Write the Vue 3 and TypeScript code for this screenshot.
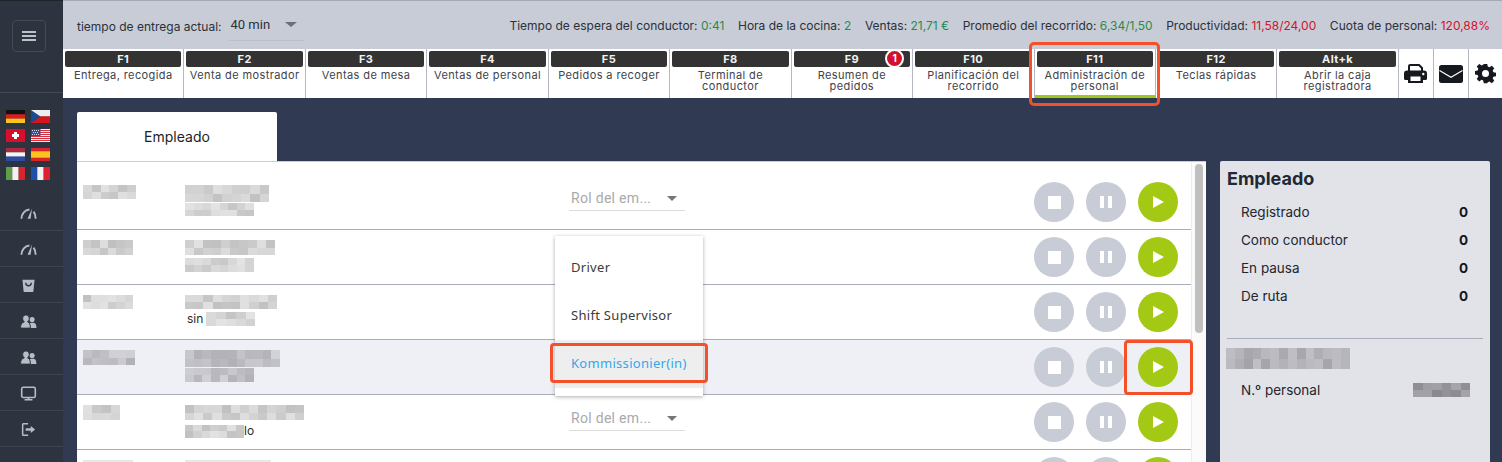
<script setup lang="ts">
type Cell = { w: number; h: number; color: string }

const fkeys = [
  { key: 'F1', label: 'Entrega, recogida' },
  { key: 'F2', label: 'Venta de mostrador' },
  { key: 'F3', label: 'Ventas de mesa' },
  { key: 'F4', label: 'Ventas de personal' },
  { key: 'F5', label: 'Pedidos a recoger' },
  { key: 'F8', label: 'Terminal de conductor' },
  { key: 'F9', label: 'Resumen de pedidos', badge: '1' },
  { key: 'F10', label: 'Planificación del recorrido' },
  { key: 'F11', label: 'Administración de personal', active: true },
  { key: 'F12', label: 'Teclas rápidas' },
  { key: 'Alt+k', label: 'Abrir la caja registradora' },
]

const stats = [
  { label: 'Tiempo de espera del conductor:', value: '0:41', tone: 'good' },
  { label: 'Hora de la cocina:', value: '2', tone: 'good' },
  { label: 'Ventas:', value: '21,71 €', tone: 'good' },
  { label: 'Promedio del recorrido:', value: '6,34/1,50', tone: 'good' },
  { label: 'Productividad:', value: '11,58/24,00', tone: 'bad' },
  { label: 'Cuota de personal:', value: '120,88%', tone: 'bad' },
]

const rows = [
  { nameW: 53, l1: 84, l2: 69, l1h: 17, l2h: 13, gap: 1, role: true, h: 55, pre: '', post: '', nameH: 14 },
  { nameW: 50, l1: 90, l2: 69, l1h: 15, l2h: 14, gap: 3, role: false, h: 55, pre: '', post: '', nameH: 15 },
  { nameW: 50, l1: 92, l2: 49, l1h: 14, l2h: 14, gap: 3, role: false, h: 55, pre: 'sin', post: '', nameH: 14 },
  { nameW: 52, l1: 95, l2: 69, l1h: 17, l2h: 14, gap: 1, role: false, h: 55, pre: '', post: '', nameH: 15, hover: true },
  { nameW: 37, l1: 119, l2: 59, l1h: 15, l2h: 13, gap: 4, role: true, h: 55, pre: '', post: 'lo', nameH: 15 },
]

const summary = ['Registrado', 'Como conductor', 'En pausa', 'De ruta']
const menuItems = ['Driver', 'Shift Supervisor', 'Kommissionier(in)']
const navIcons = ['gauge', 'gauge', 'bag', 'users', 'users', 'monitor', 'logout']

// Deterministic mosaic standing in for the blurred names in the reference.
function mosaic(width: number, height: number, seed: number, base: number): Cell[] {
  const cells: Cell[] = []
  const cols = Math.max(3, Math.round(width / 9))
  const cw = width / cols
  const rowsCount = 2
  for (let r = 0; r < rowsCount; r++) {
    for (let c = 0; c < cols; c++) {
      const n = Math.sin((c + 1) * 12.9898 + (r + 1) * 78.233 + seed) * 43758.5453
      const f = n - Math.floor(n)
      const g = Math.round(base + f * 34)
      cells.push({ w: cw, h: height / rowsCount, color: `rgb(${g},${g},${g + (base < 190 ? 6 : 1)})` })
    }
  }
  return cells
}
</script>

<template>
  <div class="app">
    <aside class="sidebar">
      <div class="burger-zone">
        <button class="burger" aria-label="Menú">
          <span></span><span></span><span></span>
        </button>
      </div>
      <div class="flags">
        <svg class="flag" viewBox="0 0 19 13"><rect width="19" height="4.4" fill="#111"/><rect y="4.3" width="19" height="4.4" fill="#dd1c1c"/><rect y="8.6" width="19" height="4.4" fill="#f7c51e"/></svg>
        <svg class="flag" viewBox="0 0 19 13"><rect width="19" height="6.5" fill="#eee"/><rect y="6.5" width="19" height="6.5" fill="#d7141a"/><path d="M0 0L9.5 6.5L0 13Z" fill="#1b4a8f"/></svg>
        <svg class="flag" viewBox="0 0 19 13"><rect width="19" height="13" fill="#da0d2e"/><path d="M8 3h3v2h2v3h-2v2H8V8H6V5h2z" fill="#fff"/></svg>
        <svg class="flag" viewBox="0 0 19 13"><rect width="19" height="13" fill="#f2f2f2"/><path d="M0 1h19v1H0zM0 3h19v1H0zM0 5h19v1H0zM0 7h19v1H0zM0 9h19v1H0zM0 11h19v1H0z" fill="#d4303e"/><rect width="9.5" height="7" fill="#39498c"/><path d="M1 1h1v1H1zM3 1h1v1H3zM5 1h1v1H5zM7 1h1v1H7zM2 3h1v1H2zM4 3h1v1H4zM6 3h1v1H6zM1 5h1v1H1zM3 5h1v1H3zM5 5h1v1H5zM7 5h1v1H7z" fill="#d8dcef"/></svg>
        <svg class="flag" viewBox="0 0 19 13"><rect width="19" height="4.4" fill="#b0283c"/><rect y="4.3" width="19" height="4.4" fill="#f4f4f4"/><rect y="8.6" width="19" height="4.4" fill="#2a4da3"/></svg>
        <svg class="flag" viewBox="0 0 19 13"><rect width="19" height="13" fill="#d9252a"/><rect y="3.3" width="19" height="6.4" fill="#f9c41f"/></svg>
        <svg class="flag" viewBox="0 0 19 13"><rect width="6.4" height="13" fill="#5c9e4b"/><rect x="6.3" width="6.4" height="13" fill="#f2f2f2"/><rect x="12.6" width="6.4" height="13" fill="#d6252f"/></svg>
        <svg class="flag" viewBox="0 0 19 13"><rect width="6.4" height="13" fill="#1f4fa8"/><rect x="6.3" width="6.4" height="13" fill="#f2f2f2"/><rect x="12.6" width="6.4" height="13" fill="#e0202c"/></svg>
      </div>
      <nav class="nav">
        <div v-for="(icon, i) in navIcons" :key="i" class="nav-item">
          <svg v-if="icon === 'gauge'" class="nav-icon" viewBox="0 0 18 18" fill="none" stroke="#b8bcc4" stroke-width="2">
            <path d="M1.5 14.5 C1.6 9.800 4.800 5.200 10 4.800" />
            <path d="M14.400 7 C15.900 9 16.600 11.600 16.600 14.500" />
            <path d="M8 14.500 L12.800 3.800 L11.200 14.500 Z" fill="#b8bcc4" stroke="none"/>
          </svg>
          <svg v-else-if="icon === 'bag'" class="nav-icon" viewBox="0 0 18 18">
            <path d="M2.600 3 H15.400 L14.200 15 Q14.100 16 13.200 16 H4.800 Q3.900 16 3.800 15 Z" fill="#b8bcc4"/>
            <path d="M6 6 C6.200 10.400 11.800 10.400 12 6" fill="none" stroke="#2e3440" stroke-width="1.400"/>
          </svg>
          <svg v-else-if="icon === 'users'" class="nav-icon" viewBox="0 0 18 18" fill="#b8bcc4">
            <path d="M12.800 4.200 A2.700 2.700 0 1 1 12.800 9.600 A2.700 2.700 0 1 1 12.800 4.200 Z"/>
            <path d="M11 16 C11.200 13.600 11 12 9.800 10.800 C11 10.200 14.200 10 15.800 10.800 C17 11.400 17.400 13.600 17.400 16 Z"/>
            <path d="M6.300 2 A3.500 3.500 0 0 1 9.800 5.500 C9.800 7.400 8.800 8.600 8 9.400 C10.300 10.300 11 12 10.900 16 H0.600 C0.600 12 1.700 10.300 4.600 9.400 C3.800 8.600 2.800 7.400 2.800 5.500 A3.500 3.500 0 0 1 6.300 2 Z" stroke="#2e343f" stroke-width="1"/>
          </svg>
          <svg v-else-if="icon === 'monitor'" class="nav-icon" viewBox="0 0 18 18" fill="none" stroke="#b8bcc4">
            <rect x="1.800" y="2.400" width="14.400" height="10.800" rx="1.600" stroke-width="1.700"/>
            <path d="M5.500 15.600 H12.500" stroke-width="1.800" stroke-linecap="round"/>
            <path d="M9 13 V15.400" stroke-width="2"/>
          </svg>
          <svg v-else class="nav-icon" viewBox="0 0 18 18" fill="none" stroke="#b8bcc4" stroke-width="1.600">
            <path d="M8.600 3 H3.600 Q2.800 3 2.800 3.800 V14.400 Q2.800 15.200 3.600 15.200 H8.600"/>
            <path d="M6 9 H12" stroke-width="2.600"/>
            <path d="M11.400 5.400 L16 9 L11.400 12.600 Z" fill="#b8bcc4" stroke="none"/>
          </svg>
        </div>
      </nav>
    </aside>

    <div class="main">
      <header class="topbar">
        <div class="delivery">
          <span class="delivery-label">tiempo de entrega actual:</span>
          <div class="delivery-select">
            <span>40 min</span>
            <i class="caret caret-dark"></i>
          </div>
        </div>
        <div class="stats">
          <span v-for="s in stats" :key="s.label" class="stat">{{ s.label }} <b :class="s.tone">{{ s.value }}</b></span>
        </div>
      </header>

      <div class="keys">
        <button
          v-for="k in fkeys"
          :key="k.key"
          class="key"
          :class="{ active: k.active }"
        >
          <span class="key-cap">{{ k.key }}</span>
          <span class="key-label">{{ k.label }}</span>
          <span v-if="k.badge" class="badge">{{ k.badge }}</span>
          <span v-if="k.active" class="callout key-callout"></span>
        </button>
        <button class="tool" aria-label="Imprimir">
          <svg viewBox="0 0 23 19" width="23" height="19">
            <path d="M5 8 V2.300 A1.300 1.300 0 0 1 6.300 1 H15 L18 4 V8" fill="none" stroke="#15181e" stroke-width="2"/>
            <path d="M3 6.500 H20 A3 3 0 0 1 23 9.500 V15 A1.500 1.500 0 0 1 21.500 16 H19 V19 H4 V16 H1.500 A1.500 1.500 0 0 1 0 15 V9.500 A3 3 0 0 1 3 6.500 Z" fill="#15181e"/>
            <rect x="6.500" y="12.500" width="10" height="4.500" fill="#fff"/>
            <circle cx="19.300" cy="10" r="1.200" fill="#fff"/>
          </svg>
        </button>
        <button class="tool" aria-label="Correo">
          <svg viewBox="0 0 24 18" width="24" height="18">
            <rect width="24" height="18" rx="2.500" fill="#15181e"/>
            <path d="M0.500 5.500 L12 12.200 L23.500 5.500" fill="none" stroke="#fff" stroke-width="1.200"/>
          </svg>
        </button>
        <button class="tool tool-last" aria-label="Ajustes">
          <svg viewBox="0 0 24 24" width="21" height="21" fill="#15181e">
            <path fill-rule="evenodd" d="M10 1h4l.6 3.100 1.900.8 2.700-1.800 2.800 2.800-1.800 2.700.8 1.900 3 .5v4l-3 .6-.8 1.900 1.800 2.700-2.800 2.800-2.700-1.800-1.900.8L14 23h-4l-.6-3-1.900-.8-2.700 1.800L2 18.200l1.800-2.700-.8-1.900-3-.6v-4l3-.5.8-1.900L2 3.900 4.800 1.100l2.700 1.800 1.900-.8zM12 8a4 4 0 1 0 0 8 4 4 0 0 0 0-8z"/>
          </svg>
        </button>
      </div>

      <div class="content">
        <section class="left">
          <div class="tab">Empleado</div>
          <div class="table">
            <div class="rows">
              <div v-for="(r, i) in rows" :key="i" class="row" :class="{ hover: r.hover }" :style="{ height: r.h + 'px' }">
                <div class="col-name">
                  <div class="blur" :style="{ width: r.nameW + 'px', height: r.nameH * 1 + 'px' }">
                    <i v-for="(c, j) in mosaic(r.nameW, r.nameH, i + 1, r.hover ? 176 : 192)" :key="j" :style="{ width: c.w + 'px', height: c.h + 'px', background: c.color }"></i>
                  </div>
                </div>
                <div class="col-info">
                  <div class="blur" :style="{ width: r.l1 + 'px', height: r.l1h + 'px' }">
                    <i v-for="(c, j) in mosaic(r.l1, r.l1h, i + 20, r.hover ? 176 : 192)" :key="j" :style="{ width: c.w + 'px', height: c.h + 'px', background: c.color }"></i>
                  </div>
                  <div class="line2" :style="{ marginTop: r.gap + 'px' }">
                    <span v-if="r.pre" class="plain pre">{{ r.pre }}</span>
                    <div class="blur" :style="{ width: r.l2 + 'px', height: r.l2h + 'px' }">
                      <i v-for="(c, j) in mosaic(r.l2, r.l2h, i + 40, r.hover ? 176 : 194)" :key="j" :style="{ width: c.w + 'px', height: c.h + 'px', background: c.color }"></i>
                    </div>
                    <span v-if="r.post" class="plain">{{ r.post }}</span>
                  </div>
                </div>
                <div class="col-role">
                  <div v-if="r.role" class="role-select">
                    <span>Rol del em...</span>
                    <i class="caret"></i>
                  </div>
                </div>
                <div class="col-actions">
                  <button class="round grey" aria-label="Detener"><span class="stop"></span></button>
                  <button class="round grey" aria-label="Pausa"><span class="pause"></span></button>
                  <button class="round green" aria-label="Iniciar">
                    <span class="play"></span>
                    <span v-if="r.hover" class="callout play-callout"></span>
                  </button>
                </div>
              </div>
              <div class="row row-tail">
                <div class="col-name">
                  <div class="blur faint" style="width: 50px; height: 4px"></div>
                </div>
                <div class="col-info">
                  <div class="blur faint" style="width: 86px; height: 4px"></div>
                </div>
                <div class="col-role"></div>
                <div class="col-actions">
                  <button class="round grey" aria-label="Detener"></button>
                  <button class="round grey" aria-label="Pausa"></button>
                  <button class="round green" aria-label="Iniciar"></button>
                </div>
              </div>

              <div class="menu">
                <div
                  v-for="(m, i) in menuItems"
                  :key="m"
                  class="menu-item"
                  :class="{ selected: i === 2 }"
                >
                  {{ m }}
                  <span v-if="i === 2" class="callout menu-callout"></span>
                </div>
              </div>
            </div>
            <div class="scrollbar"><div class="thumb"></div></div>
          </div>
        </section>

        <aside class="panel">
          <h2>Empleado</h2>
          <dl class="summary">
            <div v-for="s in summary" :key="s" class="summary-row">
              <dt>{{ s }}</dt>
              <dd>0</dd>
            </div>
          </dl>
          <hr />
          <div class="blur panel-name">
            <i v-for="(c, j) in mosaic(124, 21, 61, 160)" :key="j" :style="{ width: c.w + 'px', height: c.h + 'px', background: c.color }"></i>
          </div>
          <div class="personal">
            <span>N.º personal</span>
            <div class="blur panel-id">
              <i v-for="(c, j) in mosaic(57, 14, 71, 135)" :key="j" :style="{ width: c.w + 'px', height: c.h + 'px', background: c.color }"></i>
            </div>
          </div>
        </aside>
      </div>
    </div>
  </div>
</template>

<style>
html, body { margin: 0; padding: 0; overflow: hidden; background: #303b53; }
</style>

<style scoped>
.app {
  display: flex;
  width: 1502px;
  height: 462px;
  overflow: hidden;
  font-family: Inter, "Noto Sans", sans-serif;
  color: #2b303a;
  background: #303b53;
}
button { font: inherit; border: 0; padding: 0; background: none; color: inherit; }

.sidebar { width: 63px; flex: none; background: #2e343f; border-top: 1px solid #1e2229; box-sizing: border-box; }
.burger-zone { height: 92px; border-bottom: 1px solid #454b55; box-sizing: border-box; padding: 19px 0 0 12px; display: flex; }
.burger { width: 34px; height: 32px; box-sizing: border-box; border: 1px solid #454b56; border-radius: 4px; display: flex; flex-direction: column; justify-content: center; align-items: center; gap: 2px; }
.burger span { display: block; width: 14px; height: 2px; background: #bdc1c8; }
.flags { display: grid; grid-template-columns: 19px 19px; column-gap: 6px; row-gap: 6px; padding: 17px 0 0 6px; height: 86px; box-sizing: border-box; }
.flag { display: block; width: 19px; height: 13px; }
.nav { margin-top: 16px; }
.nav-item { height: 36px; box-sizing: border-box; border-bottom: 1px solid #3e444e; display: flex; align-items: center; justify-content: center; padding: 2px 6px 0 0; }
.nav-icon { width: 17px; height: 17px; display: block; }

.main { flex: 1; min-width: 0; display: flex; flex-direction: column; }
.topbar { height: 49px; flex: none; box-sizing: border-box; border-top: 1px solid #a5a9b5; background: #c8ccd6; display: flex; align-items: center; justify-content: space-between; padding: 0 12px 0 14px; font-size: 12px; }
.delivery { display: flex; align-items: center; }
.delivery-label { margin-top: 2px; }
.delivery-select { width: 75px; height: 30px; box-sizing: border-box; margin: 2px 0 0 7px; border-bottom: 1px solid #bcc0ca; display: flex; align-items: center; justify-content: space-between; padding: 0 7px 2px 2px; font-family: Roboto, sans-serif; font-size: 13px; }
.stats { display: flex; gap: 13.600px; }
.stat b { font-weight: 400; }
.good { color: #2a8a4c; }
.bad { color: #d5102f; }

.keys { height: 49px; flex: none; display: flex; background: #fff; }
.key { position: relative; width: 121.450px; flex: none; box-sizing: border-box; border-right: 1px solid #b4b8c2; display: flex; flex-direction: column; align-items: stretch; padding: 2px 1px 0 1px; text-align: center; }
.key-cap { height: 16px; line-height: 17px; border-radius: 2px; background: #333; color: #f2f2f2; font-size: 11px; font-weight: 700; letter-spacing: 0.4px; margin: 0 1px 0 1px; }
.key-label { font-size: 11px; line-height: 11px; letter-spacing: 0.4px; color: #3e434c; margin-top: 3px; padding: 0 3px; }
.key.active { border-bottom: 3px solid #a0c814; }
.badge { position: absolute; top: 1px; right: 9px; width: 15px; height: 15px; box-sizing: content-box; border: 2px solid #fff; border-radius: 50%; background: #d20f2f; color: #fff; font-size: 10px; line-height: 15px; font-weight: 700; margin: -1px -1px 0 0; }
.tool { width: 35px; flex: none; box-sizing: border-box; border-right: 1px solid #b4b8c2; display: flex; align-items: center; justify-content: center; }
.tool-last { border-right: 0; flex: 1; }
.tool svg { display: block; }

.callout { position: absolute; box-sizing: border-box; border: 3px solid #f4502a; border-radius: 4px; pointer-events: none; z-index: 5; }
.key-callout { left: -6px; right: -5px; top: -7px; bottom: -11px; border-radius: 5px; }
.play-callout { left: -14px; top: -7px; width: 69px; height: 55px; }
.menu-callout { left: -5px; right: -5px; top: 3px; bottom: 5px; }

.content { flex: 1; min-height: 0; display: flex; padding: 14px 12px 0 14px; gap: 0; }
.left { width: 1129px; flex: none; display: flex; flex-direction: column; }
.tab { width: 200px; height: 49px; flex: none; box-sizing: border-box; background: #fff; border-radius: 2px 2px 0 0; display: flex; align-items: center; justify-content: center; font-size: 14px; color: #1c1f25; }
.table { flex: 1; position: relative; background: #fff; border-top: 1px solid #c8ccd6; display: flex; overflow: hidden; }
.rows { position: relative; width: 1114px; flex: none; }
.row { display: flex; box-sizing: border-box; border-bottom: 1px solid #a9adb9; }
.row:first-child { height: 68px !important; }
.row.hover { background: #eff0f5; }
.row-tail { border-bottom: 0; height: 40px; }
.col-name { width: 108px; flex: none; padding: 10px 0 0 6px; box-sizing: border-box; }
.row:first-child .col-name, .row:first-child .col-info { padding-top: 23px; }
.row:first-child .col-role { padding-top: 22px; }
.row:first-child .col-actions { padding-top: 20px; }
.col-info { width: 384px; flex: none; padding-top: 10px; box-sizing: border-box; }
.col-role { width: 465px; flex: none; box-sizing: border-box; padding-top: 9px; }
.col-actions { display: flex; gap: 12px; padding-top: 7px; box-sizing: border-box; }
.blur { display: flex; flex-wrap: wrap; align-content: flex-start; overflow: hidden; }
.blur i { display: block; }
.faint { background: #dcdde0; opacity: 0.7; }
.line2 { display: flex; align-items: center; }
.plain { font-size: 12px; line-height: 14px; color: #2b2b2b; }
.pre { margin: 0 3px 0 2px; }
.role-select { width: 116px; height: 27px; box-sizing: border-box; border-bottom: 1px solid #dcdcdc; display: flex; align-items: center; justify-content: space-between; padding: 2px 8px 0 2px; font-family: Roboto, sans-serif; font-size: 14px; color: #aaa; letter-spacing: 0.3px; }
.caret { width: 0; height: 0; border-left: 5.500px solid transparent; border-right: 5.500px solid transparent; border-top: 5px solid #777; display: block; }
.caret-dark { border-top-color: #6c6f78; border-left-width: 6px; border-right-width: 6px; }
.round { position: relative; width: 40px; height: 40px; border-radius: 50%; display: flex; align-items: center; justify-content: center; flex: none; }
.grey { background: #c8ccd6; }
.green { background: #a3c914; }
.stop { width: 13px; height: 13px; background: #fff; display: block; }
.pause { width: 12px; height: 12px; display: block; background: linear-gradient(90deg, #fff 0 4px, transparent 4px 8px, #fff 8px 12px); }
.play { width: 0; height: 0; border-top: 6.500px solid transparent; border-bottom: 6.500px solid transparent; border-left: 11px solid #fff; display: block; }
.menu { position: absolute; left: 478px; top: 74px; width: 148px; height: 160px; background: #fff; box-shadow: 0 1px 4px rgba(0,0,0,0.32); z-index: 4; padding-top: 8px; box-sizing: border-box; font-family: "Noto Sans", sans-serif; font-size: 13px; letter-spacing: 0.3px; color: #3b3b3b; }
.menu-item { position: relative; height: 48px; box-sizing: border-box; padding: 0 0 2px 16px; display: flex; align-items: center; }
.menu-item.selected { background: #eeeeee; color: #2fa8ee; }
.scrollbar { width: 15px; flex: none; background: #fbfbfb; border-left: 1px solid #ececec; box-sizing: border-box; padding: 2px 0 0 3px; }
.thumb { width: 8px; height: 169px; border-radius: 4px; background: #c0c0c0; }

.panel { margin-left: 14px; flex: 1; background: #e1e3e9; border-radius: 2px 2px 0 0; margin-top: 49px; padding: 7px 22px 0 7px; box-sizing: border-box; min-width: 0; color: #22262e; }
.panel h2 { margin: 0; font-size: 18px; line-height: 22px; font-weight: 700; color: #222734; }
.summary { margin: 8px 0 0 0; }
.summary-row { display: flex; justify-content: space-between; height: 28px; align-items: center; padding-left: 14px; font-size: 13.500px; }
.summary-row dt { margin: 0; }
.summary-row dd { margin: 0; font-weight: 700; color: #14171d; }
hr { margin: 28px -15px 0 0; border: 0; border-top: 1px solid #a9adb9; }
.panel-name { width: 124px; height: 21px; margin: 9px 0 0 -1px; }
.personal { display: flex; justify-content: space-between; align-items: center; padding-left: 14px; margin: 13px -2px 0 0; font-size: 13.500px; }
.panel-id { width: 57px; height: 14px; }
</style>
